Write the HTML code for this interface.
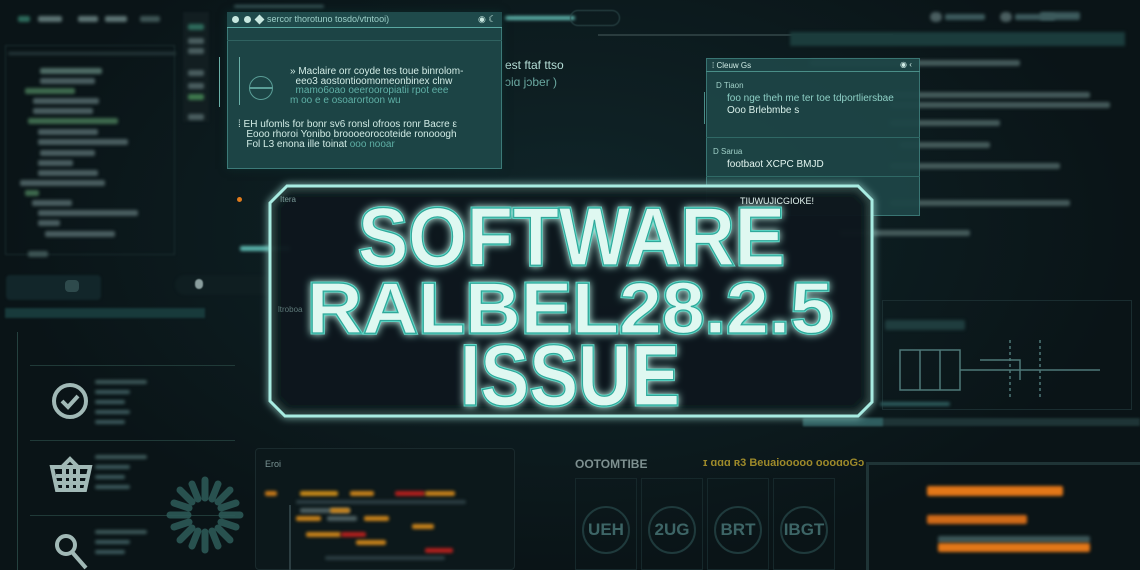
<!DOCTYPE html>
<html><head><meta charset="utf-8"><style>
*{margin:0;padding:0;box-sizing:border-box}
body{width:1140px;height:570px;overflow:hidden;background:#0a1417;font-family:"Liberation Sans",sans-serif;position:relative}
.a{position:absolute}
.bar{position:absolute;height:6px;border-radius:2px;background:#3c5a5c;filter:blur(1.5px)}
.t{position:absolute;font-size:11px;color:#9fd8cf;white-space:nowrap}
.panel{position:absolute;background:#1c4445;border:1px solid #3c7a78}
</style></head><body>
<div class="a" style="left:0;top:0;width:1140px;height:570px;background:radial-gradient(ellipse at 50% 40%,#10262a 0%,#0a1417 70%)"></div>
<div class="a" style="left:5px;top:45px;width:170px;height:210px;border:1px solid #1c2e30;filter:blur(1px)"></div>
<div class="bar" style="left:18px;top:16px;width:12px;background:#2e6b5c"></div>
<div class="bar" style="left:38px;top:16px;width:24px;background:#5d7474"></div>
<div class="bar" style="left:78px;top:16px;width:20px;background:#5d7474"></div>
<div class="bar" style="left:105px;top:16px;width:22px;background:#5d7474"></div>
<div class="bar" style="left:140px;top:16px;width:20px;background:#3e5555"></div>
<div class="bar" style="left:8px;top:52px;width:168px;height:3px;background:#26393b"></div>
<div class="bar" style="left:40px;top:68px;width:62px;background:#4f6d66"></div>
<div class="bar" style="left:40px;top:78px;width:55px;background:#4a5e60"></div>
<div class="bar" style="left:25px;top:88px;width:50px;background:#3f6a4e"></div>
<div class="bar" style="left:33px;top:98px;width:66px;background:#4a5e60"></div>
<div class="bar" style="left:33px;top:108px;width:60px;background:#4a5e60"></div>
<div class="bar" style="left:28px;top:118px;width:90px;background:#3f6a4e"></div>
<div class="bar" style="left:38px;top:129px;width:60px;background:#4a5e60"></div>
<div class="bar" style="left:38px;top:139px;width:90px;background:#4a5e60"></div>
<div class="bar" style="left:40px;top:150px;width:55px;background:#4a5e60"></div>
<div class="bar" style="left:38px;top:160px;width:35px;background:#4a5e60"></div>
<div class="bar" style="left:38px;top:170px;width:60px;background:#4a5e60"></div>
<div class="bar" style="left:20px;top:180px;width:85px;background:#4a5e60"></div>
<div class="bar" style="left:25px;top:190px;width:14px;background:#3f6a4e"></div>
<div class="bar" style="left:32px;top:200px;width:40px;background:#4a5e60"></div>
<div class="bar" style="left:38px;top:210px;width:100px;background:#4a5e60"></div>
<div class="bar" style="left:38px;top:220px;width:22px;background:#4a5e60"></div>
<div class="bar" style="left:45px;top:231px;width:70px;background:#4a5e60"></div>
<div class="bar" style="left:28px;top:251px;width:20px;background:#3e5555"></div>
<div class="a" style="left:183px;top:12px;width:26px;height:110px;background:#121e21;filter:blur(1px)"></div>
<div class="bar" style="left:188px;top:24px;width:16px;background:#2e6b5c"></div>
<div class="bar" style="left:188px;top:38px;width:16px;background:#4a5e60"></div>
<div class="bar" style="left:188px;top:48px;width:16px;background:#4a5e60"></div>
<div class="bar" style="left:188px;top:70px;width:16px;background:#4a5e60"></div>
<div class="bar" style="left:188px;top:83px;width:16px;background:#4a5e60"></div>
<div class="bar" style="left:188px;top:94px;width:16px;background:#3f7a4e"></div>
<div class="bar" style="left:188px;top:114px;width:16px;background:#4a5e60"></div>
<div class="bar" style="left:234px;top:5px;width:90px;height:3px"></div>
<div class="bar" style="left:505px;top:16px;width:70px;height:4px;background:#5fb6ae"></div>
<div class="a" style="left:570px;top:10px;width:50px;height:16px;border:1px solid #2d4a4c;border-radius:8px;filter:blur(.6px)"></div>
<div class="a" style="left:598px;top:34px;width:295px;height:2px;background:#2a3c3e"></div>
<div class="t" style="left:505px;top:58px;font-size:12px;color:#b4ddd6">est ftaf ttso</div>
<div class="t" style="left:505px;top:75px;font-size:12px;color:#6aa7a0">ɔiɑ jɔber )</div>
<div class="bar" style="left:930px;top:12px;width:12px;height:10px;border-radius:5px;background:#4a5e60"></div>
<div class="bar" style="left:945px;top:14px;width:40px"></div>
<div class="bar" style="left:1000px;top:12px;width:12px;height:10px;border-radius:5px;background:#4a5e60"></div>
<div class="bar" style="left:1015px;top:14px;width:40px"></div>
<div class="bar" style="left:1040px;top:12px;width:40px;height:8px"></div>
<div class="a" style="left:790px;top:32px;width:335px;height:14px;background:#1b3c3c;filter:blur(1.5px)"></div>
<div class="bar" style="left:810px;top:60px;width:210px;background:#445a5a"></div>
<div class="bar" style="left:890px;top:92px;width:200px;background:#445a5a"></div>
<div class="bar" style="left:890px;top:102px;width:220px;background:#445a5a"></div>
<div class="bar" style="left:890px;top:120px;width:110px;background:#445a5a"></div>
<div class="bar" style="left:900px;top:142px;width:90px;background:#445a5a"></div>
<div class="bar" style="left:890px;top:163px;width:170px;background:#445a5a"></div>
<div class="bar" style="left:890px;top:200px;width:180px;background:#445a5a"></div>
<div class="bar" style="left:840px;top:230px;width:130px;background:#445a5a"></div>
<div class="panel" style="left:227px;top:12px;width:275px;height:157px;box-shadow:0 0 8px #0d2a2a"></div>
<div class="a" style="left:227px;top:12px;width:275px;height:16px;background:#1f4a4b;border-bottom:1px solid #5aa8a2"></div>
<div class="a" style="left:232px;top:16px;width:7px;height:7px;border-radius:50%;background:#c8e8e0"></div>
<div class="a" style="left:244px;top:16px;width:7px;height:7px;border-radius:50%;background:#c8e8e0"></div>
<div class="a" style="left:256px;top:16px;width:7px;height:7px;transform:rotate(45deg);background:#c8e8e0"></div>
<div class="t" style="left:267px;top:14px;font-size:9px;color:#9ccfc8">sercor thorotuno tosdo/vtntooi)</div>
<div class="t" style="left:478px;top:14px;font-size:9px;color:#c8e8e0">◉ ☾</div>
<div class="a" style="left:227px;top:40px;width:275px;height:1px;background:#2f6260"></div>
<div class="a" style="left:219px;top:57px;width:1px;height:50px;background:#6ab0a8"></div>
<div class="a" style="left:239px;top:57px;width:1px;height:48px;background:#6ab0a8"></div>
<div class="a" style="left:249px;top:76px;width:24px;height:24px;border:1.5px solid #5a9e97;border-radius:50%"></div>
<div class="a" style="left:249px;top:87px;width:24px;height:1.5px;background:#5a9e97"></div>
<div class="t" style="left:290px;top:67px;font-size:10px;line-height:9.5px;color:#d2ece6">» Maclaire orr coyde tes toue binrolom-<br>&nbsp; eeo3 aostontioomomeonbinex clnw<br><span style="color:#5fb0a6">&nbsp; mamo6oao oeerooropiatii rpot eee<br>m oo e e osoarortoon wu</span></div>
<div class="t" style="left:238px;top:120px;font-size:10px;line-height:10px;color:#d2ece6">⁞ EH ufomls for bonr sv6 ronsl ofroos ronr Bacre ε<br>&nbsp;&nbsp; Eooo rhoroi Yonibo broooeorocoteide ronooogh<br>&nbsp;&nbsp; Fol L3 enona ille toinat <span style="color:#5fb0a6">ooo nooar</span></div>
<div class="panel" style="left:706px;top:58px;width:214px;height:158px;background:#1d4546;opacity:.95"></div>
<div class="t" style="left:712px;top:61px;font-size:8px;color:#d0ece6">⁞ Cleuw Gs</div>
<div class="t" style="left:900px;top:60px;font-size:8px;color:#d0ece6">◉ ‹</div>
<div class="a" style="left:706px;top:71px;width:214px;height:1px;background:#4a8e88"></div>
<div class="t" style="left:716px;top:81px;font-size:8px;color:#a0d0c8">D Tiaon</div>
<div class="a" style="left:704px;top:92px;width:1px;height:32px;background:#4a8e88"></div>
<div class="t" style="left:727px;top:93px;font-size:10px;color:#8ed0c6">foo nge theh me ter toe tdportliersbae</div>
<div class="t" style="left:727px;top:105px;font-size:10px;color:#d8f0ea">Ooo Brlebmbe s</div>
<div class="a" style="left:706px;top:137px;width:214px;height:1px;background:#2f6865"></div>
<div class="t" style="left:713px;top:147px;font-size:8px;color:#a0d0c8">D Sarua</div>
<div class="t" style="left:727px;top:159px;font-size:10px;color:#e2f4ef">footbaot XCPC BMJD</div>
<div class="a" style="left:706px;top:176px;width:214px;height:1px;background:#2f6865"></div>
<div class="bar" style="left:240px;top:246px;width:50px;height:5px;background:#5ab5ad"></div>
<div class="a" style="left:237px;top:197px;width:5px;height:5px;border-radius:50%;background:#e07b1c"></div>
<div class="a" style="left:6px;top:275px;width:95px;height:25px;background:#12262a;border-radius:4px;filter:blur(1px)"></div>
<div class="a" style="left:65px;top:280px;width:14px;height:12px;border-radius:4px;background:#2e4a4c"></div>
<div class="a" style="left:5px;top:308px;width:200px;height:10px;background:#183a3b;filter:blur(1px)"></div>
<div class="a" style="left:17px;top:332px;width:1px;height:238px;background:#25413f"></div>
<div class="a" style="left:30px;top:365px;width:205px;height:1px;background:#203a38"></div>
<div class="a" style="left:30px;top:440px;width:205px;height:1px;background:#203a38"></div>
<div class="a" style="left:30px;top:515px;width:205px;height:1px;background:#203a38"></div>
<svg class="a" style="left:0;top:0" width="1140" height="570">
<g fill="none" stroke="#bcd6d2" stroke-width="4" opacity=".85">
<circle cx="70" cy="401" r="16"/><path d="M62 401l6 6 10-11"/>
<path d="M52 467h38l-5 23H57z M62 467l8-8 8 8 M56 476h32 M57 483h30 M64 467v23 M71 467v23 M78 467v23"/>
<circle cx="66" cy="545" r="9"/><path d="M72 552l14 16"/>
</g>
<g stroke="#2c5856" stroke-width="7" stroke-linecap="round" opacity=".9">
<path d="M205 480v18M205 550v-18M170 515h18M240 515h-18M180 490l12 12M230 540l-12-12M230 490l-12 12M180 540l12-12M192 484l6 15M218 546l-6-15M236 503l-15 5M174 527l15-5M218 484l-6 15M192 546l6-15M236 527l-15-5M174 503l15 5"/>
</g>
</svg>
<div class="bar" style="left:95px;top:380px;width:52px;height:4px;background:#3e5a5a"></div>
<div class="bar" style="left:95px;top:390px;width:35px;height:4px"></div>
<div class="bar" style="left:95px;top:400px;width:30px;height:4px"></div>
<div class="bar" style="left:95px;top:410px;width:35px;height:4px"></div>
<div class="bar" style="left:95px;top:420px;width:30px;height:4px"></div>
<div class="bar" style="left:95px;top:455px;width:52px;height:4px;background:#3e5a5a"></div>
<div class="bar" style="left:95px;top:465px;width:35px;height:4px"></div>
<div class="bar" style="left:95px;top:475px;width:30px;height:4px"></div>
<div class="bar" style="left:95px;top:485px;width:35px;height:4px"></div>
<div class="bar" style="left:95px;top:530px;width:52px;height:4px;background:#3e5a5a"></div>
<div class="bar" style="left:95px;top:540px;width:35px;height:4px"></div>
<div class="bar" style="left:95px;top:550px;width:30px;height:4px"></div>
<div class="a" style="left:175px;top:275px;width:100px;height:20px;border-radius:10px;background:#0f1e21;filter:blur(1px)"></div>
<div class="a" style="left:195px;top:279px;width:8px;height:10px;border-radius:4px;background:#8a9e9e;filter:blur(.5px)"></div>
<div class="a" style="left:255px;top:448px;width:260px;height:122px;border:1px solid #1a2a2d;border-radius:4px;background:#0c181b"></div>
<div class="t" style="left:265px;top:459px;font-size:9px;color:#7a9494">Eroi</div>
<div class="bar" style="left:265px;top:491px;width:12px;height:5px;background:#c87a18"></div>
<div class="bar" style="left:300px;top:491px;width:38px;height:5px;background:#c88a18"></div>
<div class="bar" style="left:350px;top:491px;width:24px;height:5px;background:#c8821a"></div>
<div class="bar" style="left:395px;top:491px;width:30px;height:5px;background:#b2201c"></div>
<div class="bar" style="left:425px;top:491px;width:30px;height:5px;background:#c8821a"></div>
<div class="bar" style="left:296px;top:500px;width:170px;height:4px;background:#2c3e42"></div>
<div class="bar" style="left:300px;top:508px;width:50px;height:5px;background:#4c5e60"></div>
<div class="bar" style="left:330px;top:508px;width:20px;height:5px;background:#c8821a"></div>
<div class="bar" style="left:296px;top:516px;width:25px;height:5px;background:#c8821a"></div>
<div class="bar" style="left:327px;top:516px;width:30px;height:5px;background:#4c5e60"></div>
<div class="bar" style="left:364px;top:516px;width:25px;height:5px;background:#c8821a"></div>
<div class="bar" style="left:412px;top:524px;width:22px;height:5px;background:#c8821a"></div>
<div class="bar" style="left:306px;top:532px;width:35px;height:5px;background:#c8821a"></div>
<div class="bar" style="left:341px;top:532px;width:25px;height:5px;background:#b2201c"></div>
<div class="bar" style="left:356px;top:540px;width:30px;height:5px;background:#c8821a"></div>
<div class="bar" style="left:425px;top:548px;width:28px;height:5px;background:#b2201c"></div>
<div class="bar" style="left:325px;top:556px;width:120px;height:4px;background:#2c3e42"></div>
<div class="a" style="left:289px;top:505px;width:2px;height:65px;background:#2c3e42"></div>
<div class="t" style="left:575px;top:457px;font-size:12px;font-weight:bold;color:#7e9090">OOTOMTIBE</div>
<div class="t" style="left:703px;top:457px;font-size:11px;font-weight:bold;color:#9e8a2a">ɪ ɑɑɑ ʀ3 Beuaiooooo oooɑoGɔ</div>
<div class="a" style="left:575px;top:478px;width:62px;height:92px;border:1px solid #16282b"></div>
<div class="a" style="left:641px;top:478px;width:62px;height:92px;border:1px solid #16282b"></div>
<div class="a" style="left:707px;top:478px;width:62px;height:92px;border:1px solid #16282b"></div>
<div class="a" style="left:773px;top:478px;width:62px;height:92px;border:1px solid #16282b"></div>
<div class="a" style="left:582px;top:506px;width:48px;height:48px;border:2px solid #1f3a3c;border-radius:50%;color:#3d6566;font:bold 17px 'Liberation Sans';text-align:center;line-height:44px">UEH</div>
<div class="a" style="left:648px;top:506px;width:48px;height:48px;border:2px solid #1f3a3c;border-radius:50%;color:#3d6566;font:bold 17px 'Liberation Sans';text-align:center;line-height:44px">2UG</div>
<div class="a" style="left:714px;top:506px;width:48px;height:48px;border:2px solid #1f3a3c;border-radius:50%;color:#3d6566;font:bold 17px 'Liberation Sans';text-align:center;line-height:44px">BRT</div>
<div class="a" style="left:780px;top:506px;width:48px;height:48px;border:2px solid #1f3a3c;border-radius:50%;color:#3d6566;font:bold 17px 'Liberation Sans';text-align:center;line-height:44px">IBGT</div>
<div class="a" style="left:866px;top:462px;width:274px;height:108px;border-left:3px solid #1f3436;border-top:3px solid #1f3436"></div>
<div class="a" style="left:803px;top:418px;width:337px;height:8px;background:#1e3436;filter:blur(1px)"></div>
<div class="a" style="left:803px;top:418px;width:80px;height:8px;background:#2f5d5f;filter:blur(1px)"></div>
<div class="bar" style="left:927px;top:486px;width:136px;height:10px;background:#e37718"></div>
<div class="bar" style="left:927px;top:515px;width:100px;height:9px;background:#d06a18"></div>
<div class="bar" style="left:938px;top:536px;width:152px;height:7px;background:#3c5658"></div>
<div class="bar" style="left:938px;top:543px;width:152px;height:9px;background:#e37718"></div>
<div class="a" style="left:882px;top:300px;width:250px;height:110px;border:1px solid #1a2d30"></div>
<div class="bar" style="left:885px;top:320px;width:80px;height:10px;background:#1f3d3e"></div>
<svg class="a" style="left:890px;top:330px" width="230" height="80"><g stroke="#4e7878" fill="none" stroke-width="1.5"><path d="M10 20h60v40H10z M30 20v40 M50 20v40 M70 40h140 M90 30h40v20"/><path d="M120 10v60 M150 10v60" stroke-dasharray="3 3"/></g></svg>
<div class="bar" style="left:880px;top:402px;width:70px;height:4px;background:#2e5c5e"></div>
<svg class="a" style="left:0;top:0" width="1140" height="570">
<defs><filter id="g" x="-20%" y="-20%" width="140%" height="140%"><feGaussianBlur stdDeviation="4" result="b"/><feMerge><feMergeNode in="b"/><feMergeNode in="SourceGraphic"/></feMerge></filter></defs>
<path d="M287 186H858L872 200V402L858 416H285L270 401V203Z" fill="#0b1a1d" fill-opacity=".82" stroke="#a8ece2" stroke-width="3" filter="url(#g)"/>
<g font-family="Liberation Sans, sans-serif" font-weight="bold" fill="#dff8f1" stroke="#5fd9c8" stroke-width="3" filter="url(#g)" paint-order="stroke">
<text x="358" y="265" font-size="83" textLength="427" lengthAdjust="spacingAndGlyphs">SOFTWARE</text>
<text x="307" y="333" font-size="72" textLength="526" lengthAdjust="spacingAndGlyphs">RALBEL28.2.5</text>
<text x="460" y="405" font-size="86" textLength="220" lengthAdjust="spacingAndGlyphs">ISSUE</text>
</g>
<g font-family="Liberation Sans, sans-serif" font-weight="bold" fill="none" stroke="#2fa89a" stroke-width="1.2">
<text x="358" y="265" font-size="83" textLength="427" lengthAdjust="spacingAndGlyphs">SOFTWARE</text>
<text x="307" y="333" font-size="72" textLength="526" lengthAdjust="spacingAndGlyphs">RALBEL28.2.5</text>
<text x="460" y="405" font-size="86" textLength="220" lengthAdjust="spacingAndGlyphs">ISSUE</text>
</g>
</svg>
<div class="t" style="left:740px;top:196px;font-size:9px;color:#e2f4ef">TIUWUJICGIOKE!</div>
<div class="t" style="left:280px;top:195px;font-size:8px;color:#7a9a98">Itera</div>
<div class="t" style="left:278px;top:305px;font-size:8px;color:#5d7878">ltroboa</div>
</body></html>
